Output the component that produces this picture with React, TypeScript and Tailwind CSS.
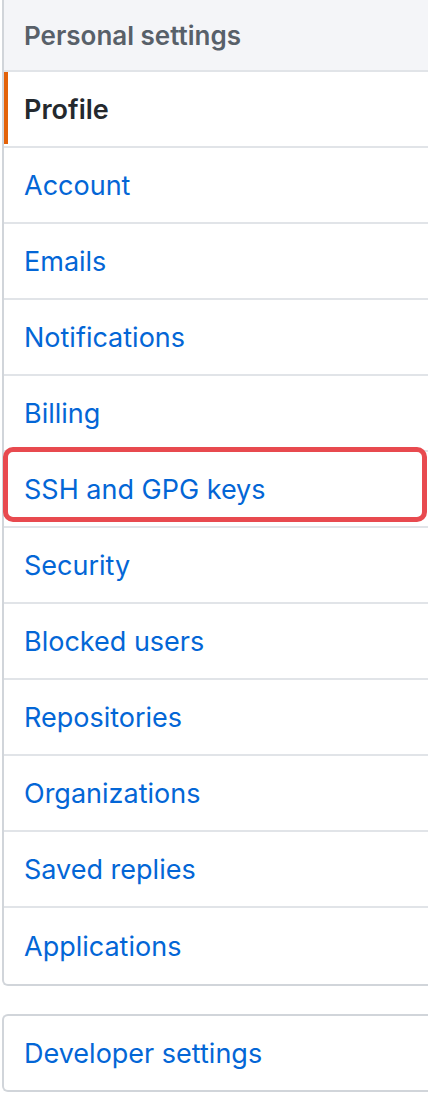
const ITEMS = [
  "Profile",
  "Account",
  "Emails",
  "Notifications",
  "Billing",
  "SSH and GPG keys",
  "Security",
  "Blocked users",
  "Repositories",
  "Organizations",
  "Saved replies",
  "Applications",
];

const font = { fontFamily: "Inter, 'Noto Sans', sans-serif" };

export default function App() {
  return (
    <div className="w-[428px] min-h-[1100px] bg-white pl-[2px] overflow-hidden" style={font}>
      {/* Personal settings */}
      <nav className="border-l-2 border-b-2 border-[#d1d5da] rounded-bl-md">
        <div className="h-[72px] flex items-center pl-5 pt-[1px] bg-[#f4f5f8] border-b-2 border-[#e1e4e8] text-[26px] font-semibold text-[#586069]">
          Personal settings
        </div>
        {ITEMS.map((item, i) => {
          const active = i === 0;
          const highlighted = item === "SSH and GPG keys";
          return (
            <div
              key={item}
              className={
                "relative h-[76px] flex items-center pl-5 pt-[3px] text-[27px] " +
                (i < ITEMS.length - 1 ? "border-b-2 border-[#e1e4e8] " : "") +
                (active ? "font-semibold text-[#24292e]" : "text-[#0366d6]")
              }
            >
              {active && (
                <span className="absolute left-0 top-0 bottom-[2px] w-[4px] bg-[#e36209]" />
              )}
              {item}
              {highlighted && (
                <span className="absolute -left-[1px] right-[1px] -top-[5px] bottom-[4px] border-[5px] border-[#e84a4f] rounded-[10px]" />
              )}
            </div>
          );
        })}
      </nav>

      {/* Developer settings */}
      <div className="mt-[28px] border-l-2 border-y-2 border-[#d1d5da] rounded-l-md">
        <div className="h-[74px] flex items-center pl-5 pt-[3px] text-[27px] text-[#0366d6]">
          Developer settings
        </div>
      </div>
    </div>
  );
}
